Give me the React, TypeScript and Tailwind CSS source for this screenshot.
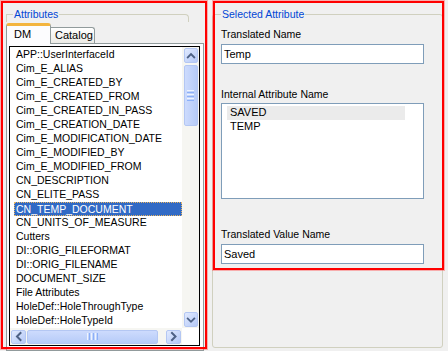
import React from 'react';

const attributes = [
  'APP::UserInterfaceId',
  'Cim_E_ALIAS',
  'Cim_E_CREATED_BY',
  'Cim_E_CREATED_FROM',
  'Cim_E_CREATED_IN_PASS',
  'Cim_E_CREATION_DATE',
  'Cim_E_MODIFICATION_DATE',
  'Cim_E_MODIFIED_BY',
  'Cim_E_MODIFIED_FROM',
  'CN_DESCRIPTION',
  'CN_ELITE_PASS',
  'CN_TEMP_DOCUMENT',
  'CN_UNITS_OF_MEASURE',
  'Cutters',
  'DI::ORIG_FILEFORMAT',
  'DI::ORIG_FILENAME',
  'DOCUMENT_SIZE',
  'File Attributes',
  'HoleDef::HoleThroughType',
  'HoleDef::HoleTypeId',
];

const arrowPaths = {
  up: 'M3 8.5 L6.5 5 L10 8.5',
  down: 'M3 5.5 L6.5 9 L10 5.5',
  left: 'M8.5 3 L5 6.5 L8.5 10',
  right: 'M5 3 L8.5 6.5 L5 10',
};

function ScrollButton({ dir }: { dir: 'up' | 'down' | 'left' | 'right' }) {
  const vertical = dir === 'up' || dir === 'down';
  return (
    <div
      className={`${vertical ? 'w-[14px] h-[15px]' : 'w-[15px] h-[14px]'} shrink-0 rounded-[2px] border border-[#b4c7f3] bg-gradient-to-br from-[#e1eafe] to-[#b4c8f7] flex items-center justify-center`}
    >
      <svg width="13" height="13" viewBox="0 0 13 13">
        <path d={arrowPaths[dir]} fill="none" stroke="#4d6185" strokeWidth="2" strokeLinecap="square" />
      </svg>
    </div>
  );
}

function Field({ label, value }: { label: string; value: string }) {
  return (
    <div className="flex flex-col">
      <div className="leading-[13px]">{label}</div>
      <div className="mt-[3px] h-[20px] border border-[#7f9db9] bg-white pl-[2px] leading-[18px] text-[11px]">{value}</div>
    </div>
  );
}

export default function App() {
  return (
    <div className="relative w-[448px] h-[351px] overflow-hidden bg-[#f0f0f0] flex font-['Liberation_Sans',Arial,sans-serif] text-[10.5px] text-black">
      {/* left: attributes group with tabs */}
      <div className="ml-[6px] w-[198px] flex flex-col">
        <fieldset className="mt-[7px] w-[183px] border border-b-0 border-[#d0d0bf] rounded-tr-[4px]">
          <legend className="ml-[6px] px-[1px] leading-[14px] text-[#0046d5]">Attributes</legend>
          <div className="h-[1px]" />
        </fieldset>

        <div className="flex h-[21px]">
          <div className="relative z-10 mt-[1px] h-[21px] w-[45px] rounded-t-[3px] border-x border-t-[3px] border-x-[#919b9c] border-t-[#f3b43e] bg-[#fcfcfe] pl-[7px] pt-[2px] leading-[13px] text-[11px]">
            DM
          </div>
          <div className="mt-[5px] h-[16px] w-[44px] rounded-tr-[3px] border-r border-t border-[#919b9c] bg-gradient-to-b from-white to-[#ecebe6] pl-[4px] pt-[1px] leading-[13px] text-[11px]">
            Catalog
          </div>
        </div>

        <div className="h-[310px] border border-[#919b9c] bg-[#fcfcfe] pl-[2px] pt-[2px]">
          <div className="w-[191px] h-[300px] border border-black bg-white flex flex-col">
            <div className="flex flex-1 min-h-0">
              <div className="flex-1 pl-[4px] pt-[1px] overflow-hidden">
                {attributes.map((a) =>
                  a === 'CN_TEMP_DOCUMENT' ? (
                    <div key={a} className="h-[14px] border border-dotted border-[#e8b562] bg-[#316ac5] pl-[1px] leading-[12px] text-white whitespace-nowrap">
                      {a}
                    </div>
                  ) : (
                    <div key={a} className="h-[14px] pl-[2px] leading-[13px] whitespace-nowrap">
                      {a}
                    </div>
                  )
                )}
              </div>
              <div className="w-[17px] bg-[#f6f6f2] flex flex-col items-center py-[1px]">
                <ScrollButton dir="up" />
                <div className="mt-[2px] h-[61px] w-[14px] rounded-[2px] border border-[#b4c7f3] bg-gradient-to-r from-[#cddbfd] to-[#b6cbf8] flex flex-col items-center justify-center gap-[1px]">
                  <div className="h-[1px] w-[7px] bg-[#eef4fe]" />
                  <div className="h-[1px] w-[7px] bg-[#8cb0f8]" />
                  <div className="h-[1px] w-[7px] bg-[#eef4fe]" />
                  <div className="h-[1px] w-[7px] bg-[#8cb0f8]" />
                  <div className="h-[1px] w-[7px] bg-[#eef4fe]" />
                  <div className="h-[1px] w-[7px] bg-[#8cb0f8]" />
                </div>
                <div className="flex-1" />
                <ScrollButton dir="down" />
              </div>
            </div>
            <div className="flex h-[17px]">
              <div className="flex-1 bg-[#f6f6f2] flex items-center px-[1px]">
                <ScrollButton dir="left" />
                <div className="ml-[1px] h-[14px] w-[131px] rounded-[2px] border border-[#b4c7f3] bg-gradient-to-b from-[#cddbfd] to-[#b6cbf8] flex items-center justify-center gap-[1px]">
                  <div className="w-[1px] h-[7px] bg-[#eef4fe]" />
                  <div className="w-[1px] h-[7px] bg-[#8cb0f8]" />
                  <div className="w-[1px] h-[7px] bg-[#eef4fe]" />
                  <div className="w-[1px] h-[7px] bg-[#8cb0f8]" />
                  <div className="w-[1px] h-[7px] bg-[#eef4fe]" />
                  <div className="w-[1px] h-[7px] bg-[#8cb0f8]" />
                </div>
                <div className="flex-1" />
                <ScrollButton dir="right" />
              </div>
              <div className="w-[17px] bg-white" />
            </div>
          </div>
        </div>
      </div>

      {/* right: selected attribute group */}
      <fieldset className="ml-[8px] mt-[7px] w-[231px] h-[341px] border border-[#d0d0bf] rounded-[3px] px-[8px]">
        <legend className="ml-[0px] px-[1px] leading-[14px] text-[#0046d5]">Selected Attribute</legend>
        <div className="mt-[7px] w-[203px]">
          <Field label="Translated Name" value="Temp" />
          <div className="mt-[24px] leading-[13px]">Internal Attribute Name</div>
          <div className="mt-[2px] h-[96px] border border-[#7f9db9] bg-white pl-[5px] pt-[2px] text-[11px]">
            <div className="h-[14px] w-[178px] bg-[#ebebeb] pl-[3px] leading-[13px]">SAVED</div>
            <div className="h-[14px] pl-[3px] leading-[13px]">TEMP</div>
          </div>
          <div className="mt-[29px]">
            <Field label="Translated Value Name" value="Saved" />
          </div>
        </div>
      </fieldset>

      {/* red annotation frames */}
      <div className="absolute left-[1px] top-[1px] w-[206px] h-[348px] border-2 border-[#ff0000] shadow-[0_0_0_1px_rgba(255,90,90,0.45)] pointer-events-none" />
      <div className="absolute left-[213px] top-[1px] w-[231px] h-[269px] border-2 border-[#ff0000] shadow-[0_0_0_1px_rgba(255,90,90,0.45)] pointer-events-none" />
    </div>
  );
}
